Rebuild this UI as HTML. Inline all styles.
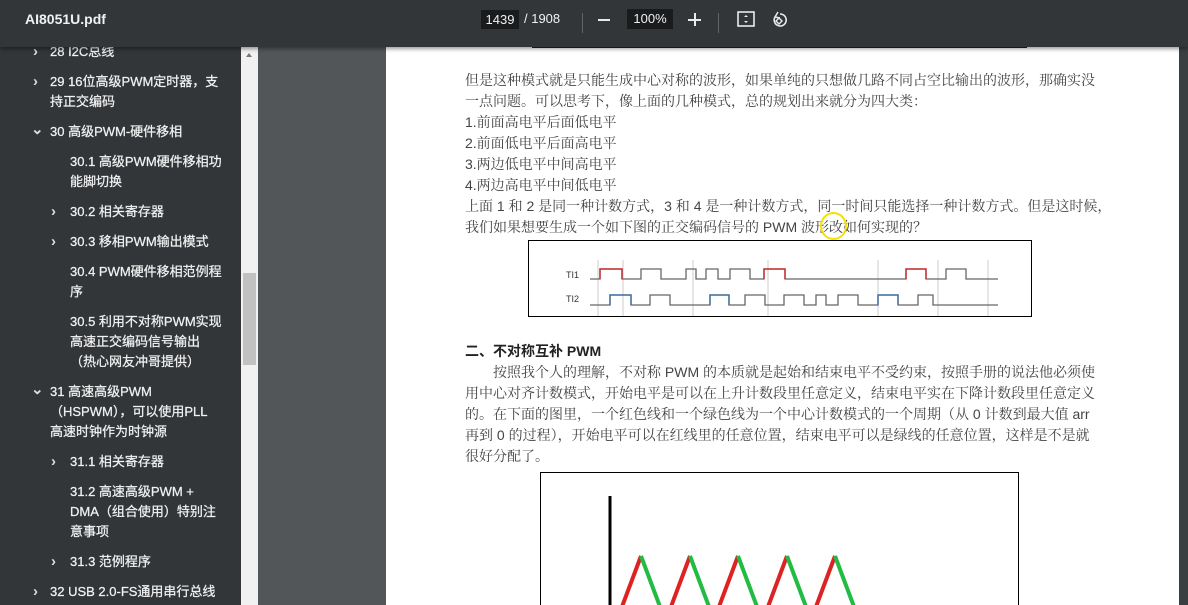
<!DOCTYPE html>
<html><head><meta charset="utf-8"><style>
*{margin:0;padding:0;box-sizing:border-box}
body{width:1188px;height:605px;overflow:hidden;background:#525659;font-family:"Liberation Sans","Noto Sans CJK SC",sans-serif;position:relative}
#top{position:absolute;left:0;top:0;width:1188px;height:47px;background:#323639;box-shadow:0 2px 4px rgba(0,0,0,.4);z-index:5;color:#f1f1f1}
#side{position:absolute;left:0;top:47px;width:241px;height:558px;background:#323639;color:#f1f1f1;font-size:13px}
#sb{position:absolute;left:241px;top:47px;width:17px;height:558px;background:#f1f1f1}
.it{position:absolute;line-height:20px;white-space:nowrap;-webkit-text-stroke:0.25px #f1f1f1}
.ch{position:absolute;font-size:15px;color:#ddd;font-weight:bold}
#page{position:absolute;left:386px;top:47px;width:793px;height:558px;background:#fff}
.t{position:absolute;left:465px;font-family:"Liberation Sans","Noto Serif CJK SC",serif;font-size:14px;color:#444;white-space:nowrap;line-height:21px}
</style></head><body>
<div id="top">
<div style="position:absolute;left:25px;top:11px;font-size:14px;font-weight:bold">AI8051U.pdf</div>
<div style="position:absolute;left:481px;top:10px;width:38px;height:19px;background:#191b1c;font-size:13px;line-height:19px;text-align:center">1439</div>
<div style="position:absolute;left:524px;top:11px;font-size:13px">/ 1908</div>
<div style="position:absolute;left:582px;top:13px;width:1px;height:20px;background:#5f6368"></div>
<div style="position:absolute;left:598px;top:19px;width:12px;height:2px;background:#e8eaed"></div>
<div style="position:absolute;left:627px;top:9px;width:46px;height:20px;background:#191b1c;font-size:13px;line-height:20px;text-align:center">100%</div>
<div style="position:absolute;left:688px;top:19px;width:13px;height:2px;background:#e8eaed"></div>
<div style="position:absolute;left:694px;top:13px;width:2px;height:13px;background:#e8eaed"></div>
<div style="position:absolute;left:718px;top:13px;width:1px;height:20px;background:#5f6368"></div>
<svg style="position:absolute;left:736px;top:10px" width="64" height="20"><rect x="2" y="2" width="16" height="14" fill="none" stroke="#e8eaed" stroke-width="1.6"/><path d="M10 5l-2 2h4zM10 13l-2-2h4z" fill="#e8eaed"/><path d="M44 4a6 6 0 1 1-5 3" fill="none" stroke="#e8eaed" stroke-width="1.6"/><path d="M42 2l-3 5 5 1" fill="none" stroke="#e8eaed" stroke-width="1.5"/><path d="M40 11l3-3 3 3-3 3z" fill="none" stroke="#e8eaed" stroke-width="1.4"/></svg>
</div>
<div id="side">
<span class="ch" style="left:33px;top:-4px">›</span><div class="it" style="left:50px;top:-5px">28 I2C总线</div>
<span class="ch" style="left:33px;top:26px">›</span><div class="it" style="left:50px;top:25px">29 16位高级PWM定时器，支<br>持正交编码</div>
<span class="ch" style="left:31px;top:73px">⌄</span><div class="it" style="left:50px;top:75px">30 高级PWM-硬件移相</div>
<div class="it" style="left:70px;top:105px">30.1 高级PWM硬件移相功<br>能脚切换</div>
<span class="ch" style="left:51px;top:156px">›</span><div class="it" style="left:70px;top:155px">30.2 相关寄存器</div>
<span class="ch" style="left:51px;top:186px">›</span><div class="it" style="left:70px;top:185px">30.3 移相PWM输出模式</div>
<div class="it" style="left:70px;top:215px">30.4 PWM硬件移相范例程<br>序</div>
<div class="it" style="left:70px;top:265px">30.5 利用不对称PWM实现<br>高速正交编码信号输出<br>（热心网友冲哥提供）</div>
<span class="ch" style="left:31px;top:333px">⌄</span><div class="it" style="left:50px;top:335px">31 高速高级PWM<br>（HSPWM），可以使用PLL<br>高速时钟作为时钟源</div>
<span class="ch" style="left:51px;top:406px">›</span><div class="it" style="left:70px;top:405px">31.1 相关寄存器</div>
<div class="it" style="left:70px;top:435px">31.2 高速高级PWM +<br>DMA（组合使用）特别注<br>意事项</div>
<span class="ch" style="left:51px;top:506px">›</span><div class="it" style="left:70px;top:505px">31.3 范例程序</div>
<span class="ch" style="left:33px;top:536px">›</span><div class="it" style="left:50px;top:535px">32 USB 2.0-FS通用串行总线</div>
</div>
<div id="sb"><div style="position:absolute;left:2px;top:226px;width:13px;height:92px;background:#c1c1c1"></div><div style="position:absolute;left:5px;top:6px;border:3px solid transparent;border-bottom:4px solid #777;border-top:0"></div></div>
<div id="page"></div>
<div style="position:absolute;left:1179px;top:47px;width:9px;height:558px;background:#3c3f42"></div>
<div style="position:absolute;left:532px;top:46px;width:495px;height:2px;background:#222"></div>
<div class="t" style="top:70px">但是这种模式就是只能生成中心对称的波形，如果单纯的只想做几路不同占空比输出的波形，那确实没</div>
<div class="t" style="top:91px">一点问题。可以思考下，像上面的几种模式，总的规划出来就分为四大类：</div>
<div class="t" style="top:112px">1.前面高电平后面低电平</div>
<div class="t" style="top:133px">2.前面低电平后面高电平</div>
<div class="t" style="top:154px">3.两边低电平中间高电平</div>
<div class="t" style="top:175px">4.两边高电平中间低电平</div>
<div class="t" style="top:196px">上面 1 和 2 是同一种计数方式，3 和 4 是一种计数方式，同一时间只能选择一种计数方式。但是这时候，</div>
<div class="t" style="top:217px">我们如果想要生成一个如下图的正交编码信号的 PWM 波形改如何实现的？</div>
<div style="position:absolute;left:820px;top:212px;width:27px;height:28px;border:2px solid #f5e000;border-radius:50%"></div>
<svg style="position:absolute;left:528px;top:240px" width="504" height="77"><rect x="0.5" y="0.5" width="503" height="76" fill="#fff" stroke="#000"/>
<g stroke="#ccc"><line x1="70" y1="20" x2="70" y2="76"/><line x1="95" y1="20" x2="95" y2="76"/><line x1="165" y1="20" x2="165" y2="76"/><line x1="240" y1="20" x2="240" y2="76"/><line x1="350" y1="20" x2="350" y2="76"/><line x1="410" y1="20" x2="410" y2="76"/><line x1="460" y1="20" x2="460" y2="76"/></g>
<text x="38" y="38" font-size="9" fill="#333" font-family="Liberation Sans">TI1</text><text x="38" y="62" font-size="9" fill="#333" font-family="Liberation Sans">TI2</text>
<path d="M62 39H72V29H94V39H113V29H133V39H158V29H168V39H178V29H190V39H202V29H222V39H236V29H257V39H378V29H398V39H418V29H438V39H470" fill="none" stroke="#666" stroke-width="1.3"/>
<path d="M72 39V29H94V39M236 39V29H257V39M378 39V29H398V39" fill="none" stroke="#c33" stroke-width="1.5"/>
<path d="M62 65H82V55H103V65H122V55H142V65H182V55H201V65H217V55H237V65H256V55H276V65H288V55H298V65H310V55H330V65H350V55H370V65H390V55H405V65H470" fill="none" stroke="#666" stroke-width="1.3"/>
<path d="M82 65V55H103V65M182 65V55H201V65M350 65V55H370V65" fill="none" stroke="#47a" stroke-width="1.5"/>
</svg>
<div class="t" style="top:341px;font-family:'Liberation Sans','Noto Sans CJK SC',sans-serif;font-weight:bold;color:#222">二、不对称互补 PWM</div>
<div class="t" style="top:362px">　　按照我个人的理解，不对称 PWM 的本质就是起始和结束电平不受约束，按照手册的说法他必须使</div>
<div class="t" style="top:383px">用中心对齐计数模式，开始电平是可以在上升计数段里任意定义，结束电平实在下降计数段里任意定义</div>
<div class="t" style="top:404px">的。在下面的图里，一个红色线和一个绿色线为一个中心计数模式的一个周期（从 0 计数到最大值 arr</div>
<div class="t" style="top:425px">再到 0 的过程），开始电平可以在红线里的任意位置，结束电平可以是绿线的任意位置，这样是不是就</div>
<div class="t" style="top:446px">很好分配了。</div>
<svg style="position:absolute;left:540px;top:472px" width="479" height="133"><rect x="0.5" y="0.5" width="478" height="140" fill="#fff" stroke="#000"/>
<line x1="70" y1="24" x2="70" y2="133" stroke="#000" stroke-width="3"/>
<g stroke-width="4" fill="none"><path d="M80 140L101 84M129 140L150 84M177 140L198 84M226 140L247 84M274 140L295 84" stroke="#d22"/><path d="M101 84L122 140M150 84L171 140M198 84L219 140M247 84L268 140M295 84L316 140" stroke="#2b4"/></g>
</svg>
</body></html>
